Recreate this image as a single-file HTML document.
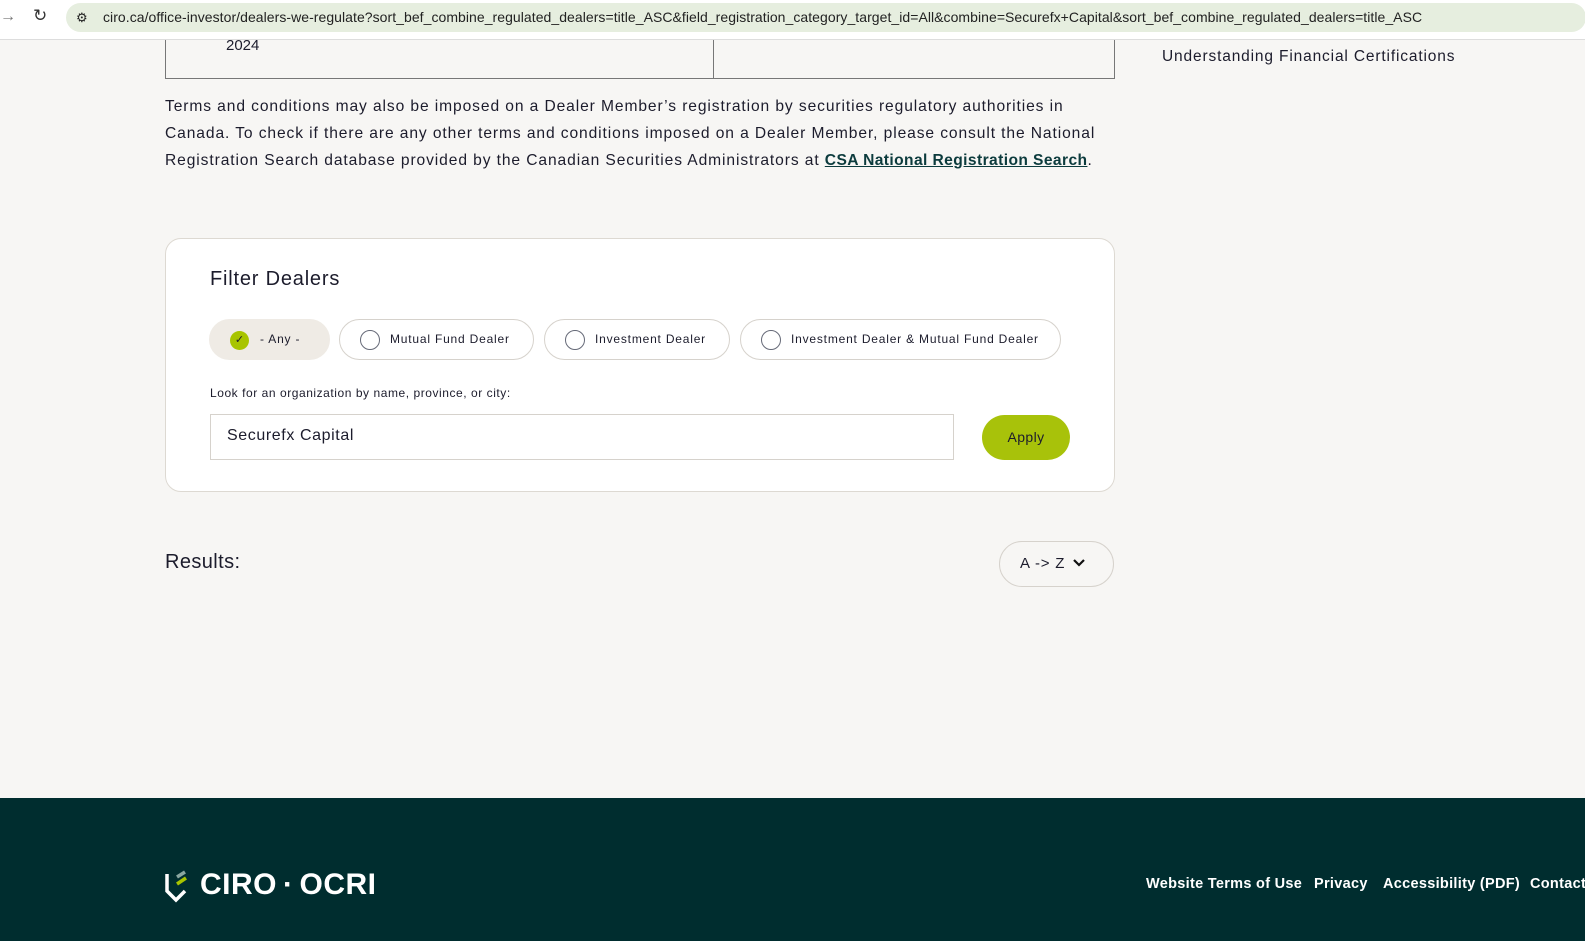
<!DOCTYPE html>
<html><head><meta charset="utf-8"><style>
*{margin:0;padding:0;box-sizing:border-box}
body{width:1585px;height:941px;overflow:hidden;background:#f7f6f4;font-family:"Liberation Sans",sans-serif;color:#1c1c2c;position:relative}
.bar{position:absolute;left:0;top:0;width:1585px;height:40px;background:#fff;border-bottom:1px solid #ddd}
.url{position:absolute;left:66px;top:3px;width:1520px;height:29px;background:#e6eedf;border-radius:15px;font-size:14px;line-height:29px;padding-left:37px;color:#222;white-space:nowrap;overflow:hidden;letter-spacing:0.05px}
.abs{position:absolute;white-space:nowrap}
.p{font-size:15.6px;letter-spacing:0.9px;line-height:27px}
.card{position:absolute;left:165px;top:238px;width:950px;height:254px;background:#fff;border:1px solid #ddd9d2;border-radius:16px}
.pill{position:absolute;top:319px;height:41px;border:1px solid #d6d2cc;border-radius:21px;background:#fff;font-size:12px;letter-spacing:0.8px;line-height:39px;padding-left:50px}
.pill i{position:absolute;left:20px;top:10px;width:20px;height:20px;border:1.5px solid #666a78;border-radius:50%}
.foot{position:absolute;left:0;top:798px;width:1585px;height:143px;background:#002d2f}
.fl{position:absolute;top:876px;color:#fff;font-size:14.5px;font-weight:bold;white-space:nowrap;letter-spacing:0.3px}
</style></head><body>
<div class="bar">
<div class="abs" style="left:0;top:8px;font-size:16px;color:#777">→</div>
<div class="abs" style="left:33px;top:6px;font-size:17px;color:#333">↻</div>
<div class="url"><span style="position:absolute;left:10px;top:0;font-size:13px">⚙</span>ciro.ca/office-investor/dealers-we-regulate?sort_bef_combine_regulated_dealers=title_ASC&amp;field_registration_category_target_id=All&amp;combine=Securefx+Capital&amp;sort_bef_combine_regulated_dealers=title_ASC</div>
</div>
<div class="abs" style="left:165px;top:40px;width:950px;height:39px;border:1px solid #777;border-top:none"></div>
<div class="abs" style="left:713px;top:40px;width:1px;height:39px;background:#777"></div>
<div class="abs" style="left:226px;top:37px;font-size:15px">2024</div>
<div class="abs" style="left:1162px;top:48px;font-size:15.5px;letter-spacing:0.85px">Understanding Financial Certifications</div>
<div class="abs p" style="left:165px;top:93px">Terms and conditions may also be imposed on a Dealer Member’s registration by securities regulatory authorities in<br>Canada. To check if there are any other terms and conditions imposed on a Dealer Member, please consult the National<br>Registration Search database provided by the Canadian Securities Administrators at <a style="color:#0c3b3d;font-weight:bold;text-decoration:underline;letter-spacing:0.4px">CSA National Registration Search</a>.</div>
<div class="card"></div>
<div class="abs" style="left:210px;top:268px;font-size:20px;letter-spacing:0.8px">Filter Dealers</div>
<div class="pill" style="left:209px;width:121px;background:#efebe5;border-color:#efebe5;padding-left:50px">- Any -<span style="position:absolute;left:20px;top:11px;width:19px;height:19px;border-radius:50%;background:#a8c400;font-size:11px;line-height:19px;text-align:center;letter-spacing:0">✓</span></div>
<div class="pill" style="left:339px;width:195px"><i></i>Mutual Fund Dealer</div>
<div class="pill" style="left:544px;width:186px"><i></i>Investment Dealer</div>
<div class="pill" style="left:740px;width:321px"><i></i>Investment Dealer &amp; Mutual Fund Dealer</div>
<div class="abs" style="left:210px;top:386px;font-size:12px;letter-spacing:0.55px">Look for an organization by name, province, or city:</div>
<div class="abs" style="left:210px;top:414px;width:744px;height:46px;border:1px solid #d6d2cc;background:#fff;font-size:16px;line-height:42px;padding-left:16px;letter-spacing:0.6px">Securefx Capital</div>
<div class="abs" style="left:982px;top:415px;width:88px;height:45px;border-radius:23px;background:#a8c20a;font-size:14px;line-height:45px;text-align:center;letter-spacing:0.4px">Apply</div>
<div class="abs" style="left:165px;top:551px;font-size:20px;letter-spacing:0.4px">Results:</div>
<div class="abs" style="left:999px;top:541px;width:115px;height:46px;border:1px solid #d6d2cc;border-radius:23px;font-size:15px;line-height:44px;padding-left:20px;letter-spacing:0.8px">A -&gt; Z <svg width="14" height="10" style="margin-left:2px" viewBox="0 0 14 10"><path d="M2 2l5 5 5-5" fill="none" stroke="#111" stroke-width="2.2"/></svg></div>
<div class="foot"></div>
<svg class="abs" style="left:164px;top:870px" width="28" height="34" viewBox="0 0 28 34"><path d="M3 4v17l9 9 9-9" fill="none" stroke="#fff" stroke-width="3.5"/><path d="M13 14l9-6" stroke="#a8c400" stroke-width="3.5"/><path d="M13 7l8-5" stroke="#8aa6a0" stroke-width="3.5"/></svg>
<div class="abs" style="left:200px;top:868px;color:#fff;font-size:30px;font-weight:bold;letter-spacing:0.5px">CIRO<span style="margin:0 6px">·</span>OCRI</div>
<div class="fl" style="left:1146px">Website Terms of Use</div>
<div class="fl" style="left:1314px">Privacy</div>
<div class="fl" style="left:1383px">Accessibility (PDF)</div>
<div class="fl" style="left:1530px">Contact</div>
</body></html>
